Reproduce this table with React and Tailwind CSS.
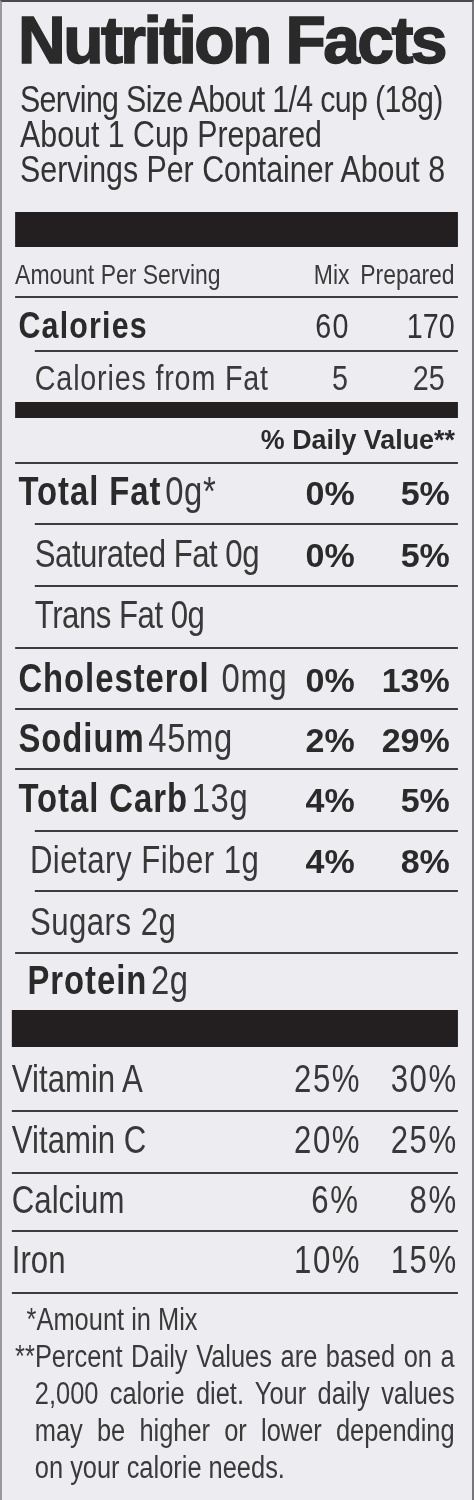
// Liberation Sans has no narrow cut here, so the label is laid out wide and squeezed horizontally.
const FONT = "[font-family:'Liberation_Sans',Arial,sans-serif]";

function Rule({ indent }) {
  return <div className={indent ? "h-[2px] bg-[#3d3d3d] ml-[24px]" : "h-[2px] bg-[#3d3d3d]"} />;
}

// un-squeezes the bold percents, which are not condensed on the label
const Wide = ({ children }) => <span className="inline-block origin-right scale-x-[1.22]">{children}</span>;

function Row({ box, children, mix, prep, vitamin }) {
  if (vitamin) {
    return (
      <div className={`flex flex-col justify-end ${box}`}>
        <div className="flex items-baseline leading-none text-[38px] text-[#383838]">
          <div className="flex-1 whitespace-nowrap">{children}</div>
          <span className="w-[80px] text-right tracking-[2px]">{mix}</span>
          <span className="w-[120px] text-right tracking-[2px]">{prep}</span>
        </div>
      </div>
    );
  }
  return (
    <div className={`flex flex-col justify-end ${box}`}>
      <div className="flex items-baseline leading-none pr-[10px]">
        <div className="flex-1 whitespace-nowrap">{children}</div>
        {mix && (
          <span className="w-[80px] text-right text-[34px] font-bold text-[#2a2a2a]">
            <Wide>{mix}</Wide>
          </span>
        )}
        {prep && (
          <span className="w-[116px] text-right text-[34px] font-bold text-[#2a2a2a]">
            <Wide>{prep}</Wide>
          </span>
        )}
      </div>
    </div>
  );
}

const B = ({ children }) => <span className="text-[40px] font-bold tracking-[1.2px] text-[#2a2a2a]">{children}</span>;
// amount that follows a bold nutrient name
const Amt = ({ children }) => <span className="text-[40px] tracking-[0.8px] text-[#383838]">{children}</span>;
const L = ({ children, tight, loose }) => (
  <span
    className={
      tight
        ? "text-[38px] tracking-[-0.6px] text-[#383838]"
        : loose
        ? "text-[38px] tracking-[0.6px] text-[#383838]"
        : "text-[38px] text-[#383838]"
    }
  >
    {children}
  </span>
);

export default function App() {
  return (
    <div className="w-[474px] h-[1500px] overflow-hidden bg-[#ededf1] border-t-2 border-l-2 border-r-2 border-t-[#4a4a4a] border-l-[#9a9a9e] border-r-[#77777b]">
      <div className={`w-[573px] origin-top-left scale-x-[0.82] pt-[5px] pl-[16px] pr-[17px] ${FONT}`}>
        {/* Header */}
        <h1 className="origin-left scale-x-[1.22] pl-[3px] text-[66px] leading-none font-bold tracking-[-2.6px] text-[#2a2a2a] [-webkit-text-stroke:1.5px_#2a2a2a]">
          Nutrition Facts
        </h1>
        <div className="mt-[9px] pl-[6px] text-[37px] leading-[35px] text-[#333]">
          <p className="tracking-[-0.8px]">Serving Size About 1/4 cup (18g)</p>
          <p>About 1 Cup Prepared</p>
          <p>Servings Per Container About 8</p>
        </div>
        <div className="mt-[25px] h-[35px] bg-[#231f20]" />

        {/* Amount per serving */}
        <div className="flex flex-col justify-end h-[49px] pb-[7px]">
          <div className="flex items-baseline leading-none text-[28px] text-[#3a3a3a]">
            <span className="flex-1">Amount Per Serving</span>
            <span className="mr-[13px]">Mix</span>
            <span className="mr-[4px]">Prepared</span>
          </div>
        </div>
        <Rule />
        <div className="flex flex-col justify-end h-[52px] pb-[6px]">
          <div className="flex items-baseline leading-none pl-[4px] pr-[4px]">
            <span className="flex-1 text-[37px] font-bold tracking-[1.5px] text-[#2a2a2a]">Calories</span>
            <span className="text-right text-[35px] tracking-[1.5px] text-[#333]">60</span>
            <span className="w-[128px] text-right text-[35px] text-[#333]">170</span>
          </div>
        </div>
        <Rule indent />
        <div className="flex flex-col justify-end h-[50px] pb-[7px]">
          <div className="flex items-baseline leading-none pl-[24px] pr-[16px] text-[35px] text-[#3a3a3a]">
            <span className="flex-1 tracking-[1px]">Calories from Fat</span>
            <span className="text-right">5</span>
            <span className="w-[118px] text-right">25</span>
          </div>
        </div>
        <div className="h-[16px] bg-[#231f20]" />
        <div className="flex flex-col justify-end h-[44px] pb-[8px]">
          <p className="leading-none text-right pr-[4px] text-[28px] font-bold text-[#2a2a2a]">
            <span className="inline-block origin-right scale-x-[1.17]">% Daily Value**</span>
          </p>
        </div>
        <Rule />

        {/* Nutrients */}
        <Row box="h-[59px] pb-[12px] pl-[4px]" mix="0%" prep="5%">
          <B>Total Fat</B> <Amt>0g*</Amt>
        </Row>
        <Rule indent />
        <Row box="h-[60px] pb-[12px] pl-[24px]" mix="0%" prep="5%">
          <L tight>Saturated Fat 0g</L>
        </Row>
        <Rule indent />
        <Row box="h-[60px] pb-[13px] pl-[24px]">
          <L tight>Trans Fat 0g</L>
        </Row>
        <Rule />
        <Row box="h-[59px] pb-[10px] pl-[4px]" mix="0%" prep="13%">
          <B>Cholesterol</B> <span className="ml-[10px]"><Amt>0mg</Amt></span>
        </Row>
        <Rule />
        <Row box="h-[58px] pb-[10px] pl-[4px]" mix="2%" prep="29%">
          <B>Sodium</B> <Amt>45mg</Amt>
        </Row>
        <Rule />
        <Row box="h-[60px] pb-[12px] pl-[4px]" mix="4%" prep="5%">
          <B>Total Carb</B> <Amt>13g</Amt>
        </Row>
        <Rule indent />
        <Row box="h-[58px] pb-[11px] pl-[18px]" mix="4%" prep="8%">
          <L loose>Dietary Fiber 1g</L>
        </Row>
        <Rule indent />
        <Row box="h-[60px] pb-[11px] pl-[18px]">
          <L loose>Sugars 2g</L>
        </Row>
        <Rule />
        <Row box="h-[56px] pb-[10px] pl-[15px]">
          <B>Protein</B> <Amt>2g</Amt>
        </Row>

        {/* Vitamins */}
        <div className="-ml-[4px]">
          <div className="h-[37px] bg-[#231f20]" />
          <Row vitamin box="h-[63px] pb-[12px]" mix="25%" prep="30%">
            Vitamin A
          </Row>
          <div className="h-[2px] bg-[#3d3d3d]" />
          <Row vitamin box="h-[60px] pb-[13px]" mix="20%" prep="25%">
            Vitamin C
          </Row>
          <div className="h-[2px] bg-[#3d3d3d]" />
          <Row vitamin box="h-[56px] pb-[11px]" mix="6%" prep="8%">
            Calcium
          </Row>
          <div className="h-[2px] bg-[#3d3d3d]" />
          <Row vitamin box="h-[60px] pb-[13px]" mix="10%" prep="15%">
            Iron
          </Row>
          <div className="h-[2px] bg-[#3d3d3d]" />
        </div>

        {/* Footnotes */}
        <div className="pt-[7px] pl-[24px] pr-[4px] text-[31px] leading-[37px] text-[#3a3a3a] whitespace-nowrap">
          <p className="-ml-[10px]">*Amount in Mix</p>
          <p className="-ml-[24px] text-justify [text-align-last:justify]">**Percent Daily Values are based on a</p>
          <p className="text-justify [text-align-last:justify]">2,000 calorie diet. Your daily values</p>
          <p className="text-justify [text-align-last:justify]">may be higher or lower depending</p>
          <p>on your calorie needs.</p>
        </div>
      </div>
    </div>
  );
}
